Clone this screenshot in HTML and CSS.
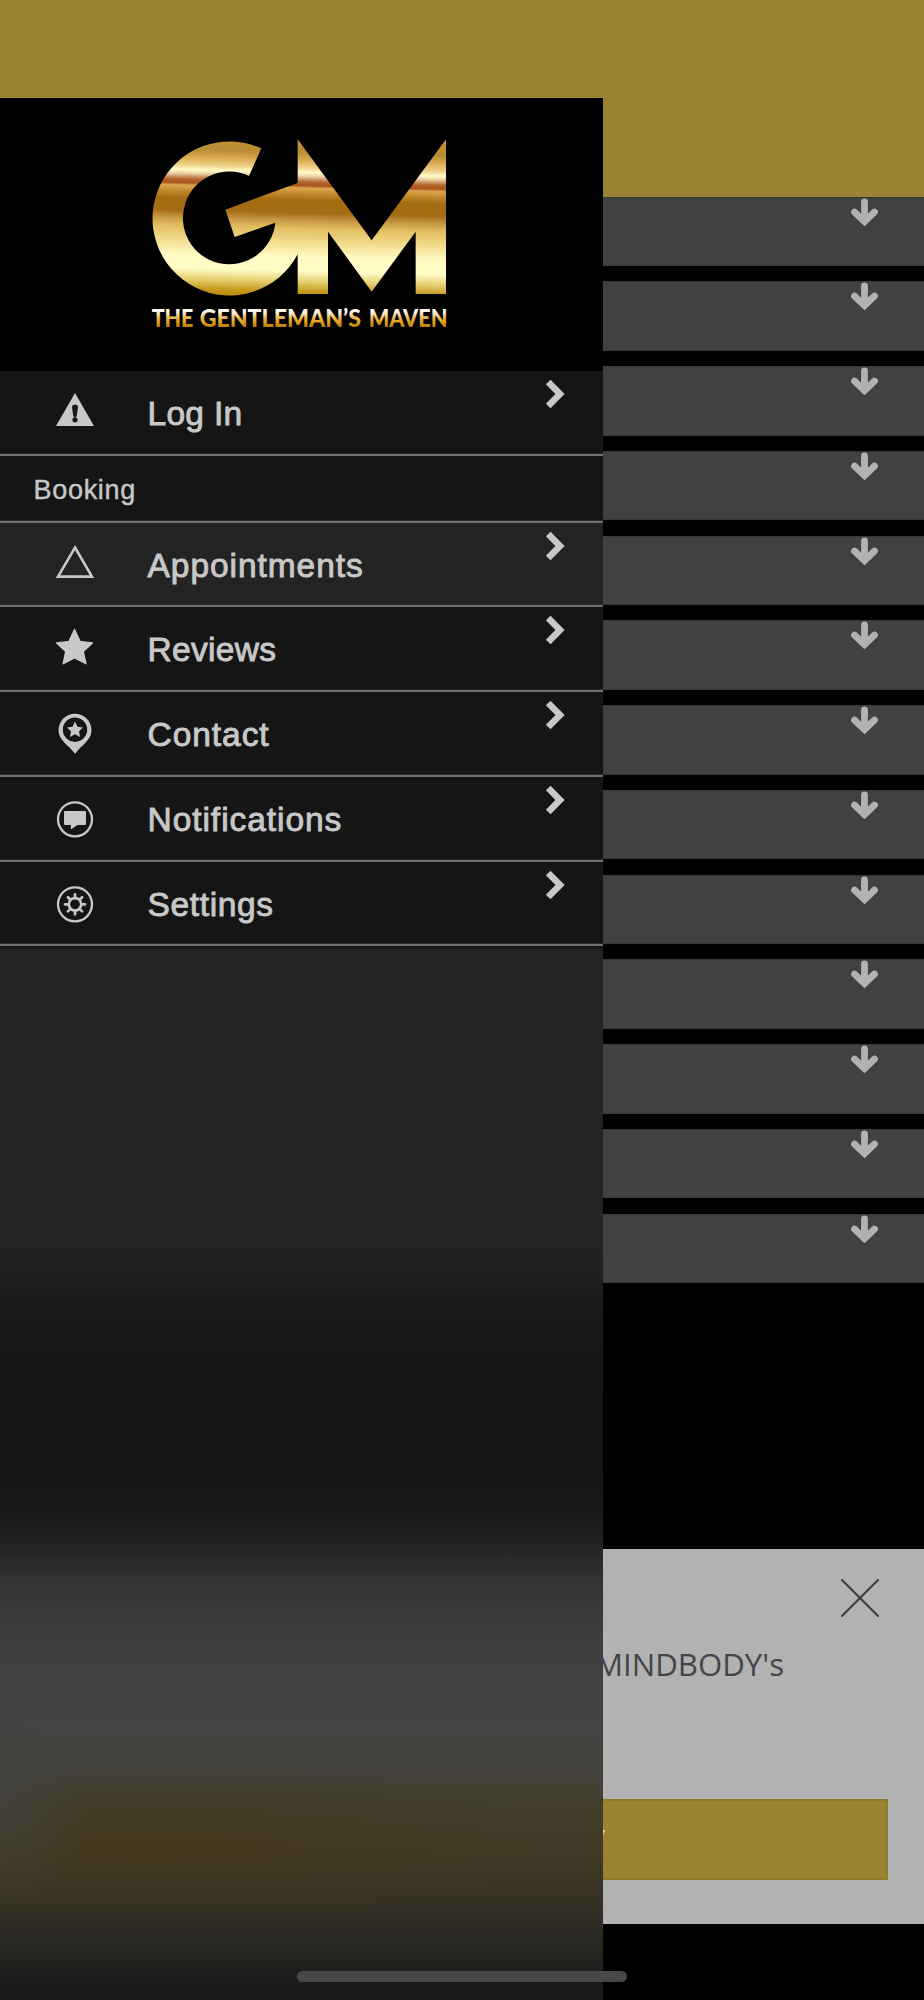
FILE: index.html
```html
<!DOCTYPE html>
<html lang="en">
<head>
<meta charset="utf-8">
<title>The Gentleman's Maven</title>
<link rel="stylesheet" href="styles.css">
</head>
<body>
<svg class="defs" width="0" height="0">
  <symbol id="down" viewBox="0 0 28 28"><path d="M14.500 4V20M4.500 14L14.500 23.600L24.500 14" fill="none" stroke="#b2b2b2" stroke-width="6.8" stroke-linecap="round"/><path d="M8.500 17L14.500 27.200L20.500 17Z" fill="#b2b2b2"/></symbol>
  <symbol id="chev" viewBox="0 0 20 30"><path d="M3.2 3L15 15L3.2 27" fill="none" stroke="#c8c8c8" stroke-width="6.6"/></symbol>
</svg>
<div class="screen">
  <header class="topbar"></header>
  <main class="list">
    <div class="bar"><svg class="down"><use href="#down"/></svg></div>
    <div class="bar"><svg class="down"><use href="#down"/></svg></div>
    <div class="bar"><svg class="down"><use href="#down"/></svg></div>
    <div class="bar"><svg class="down"><use href="#down"/></svg></div>
    <div class="bar"><svg class="down"><use href="#down"/></svg></div>
    <div class="bar"><svg class="down"><use href="#down"/></svg></div>
    <div class="bar"><svg class="down"><use href="#down"/></svg></div>
    <div class="bar"><svg class="down"><use href="#down"/></svg></div>
    <div class="bar"><svg class="down"><use href="#down"/></svg></div>
    <div class="bar"><svg class="down"><use href="#down"/></svg></div>
    <div class="bar"><svg class="down"><use href="#down"/></svg></div>
    <div class="bar"><svg class="down"><use href="#down"/></svg></div>
    <div class="bar"><svg class="down"><use href="#down"/></svg></div>
  </main>
  <section class="banner">
    <svg class="close" viewBox="0 0 38 38"><path d="M1 1L37 37M37 1L1 37" stroke="#3e3f44" stroke-width="2.2" stroke-linecap="round"/></svg>
    <p class="message">MINDBODY's</p>
    <div class="button"><span>y</span></div>
  </section>

  <aside class="drawer">
    <div class="brand">
      <svg class="logo" viewBox="0 0 1020 690">
        <defs>
          <linearGradient id="gold" gradientUnits="userSpaceOnUse" x1="300" y1="58" x2="288" y2="526">
            <stop offset="0" stop-color="#c2922c"/><stop offset=".07" stop-color="#b88d39"/>
            <stop offset=".12" stop-color="#dba94d"/><stop offset=".17" stop-color="#efd28b"/>
            <stop offset=".2" stop-color="#fffbc8"/><stop offset=".225" stop-color="#ecd0a4"/>
            <stop offset=".26" stop-color="#b2672f"/><stop offset=".285" stop-color="#a9541c"/>
            <stop offset=".3" stop-color="#dca64f"/><stop offset=".335" stop-color="#c38a2d"/>
            <stop offset=".38" stop-color="#a56d11"/><stop offset=".46" stop-color="#a56c15"/>
            <stop offset=".51" stop-color="#c89a45"/><stop offset=".56" stop-color="#e2be62"/>
            <stop offset=".65" stop-color="#f2dc8e"/><stop offset=".74" stop-color="#fffac2"/>
            <stop offset=".83" stop-color="#fffdc8"/><stop offset=".9" stop-color="#e6cf72"/>
            <stop offset=".96" stop-color="#c59b1f"/><stop offset="1" stop-color="#bd8b08"/>
          </linearGradient>
          <linearGradient id="tag" gradientUnits="userSpaceOnUse" x1="0" y1="565" x2="0" y2="622">
            <stop offset="0" stop-color="#fff"/><stop offset=".22" stop-color="#fbf2dc"/>
            <stop offset=".5" stop-color="#e8b850"/><stop offset=".72" stop-color="#e0a01a"/>
            <stop offset="1" stop-color="#b57a08"/>
          </linearGradient>
        </defs>
        <path fill="url(#gold)" d="M503 58L725 361L948 58V522H857V335L725 515L594 335V522H503V403A231 231 0 1 1 394 85L357 168A139 139 0 1 0 436 308L314 351L286 269L503 189Z"/>
        <g class="tagline" fill="url(#tag)">
          <text x="65" y="620" textLength="125" lengthAdjust="spacingAndGlyphs">THE</text>
          <text x="209" y="620" textLength="484" lengthAdjust="spacingAndGlyphs">GENTLEMAN’S</text>
          <text x="716" y="620" textLength="236" lengthAdjust="spacingAndGlyphs">MAVEN</text>
        </g>
      </svg>
    </div>
    <nav class="menu">
      <a class="item">
        <svg class="icon" viewBox="0 0 40 44"><path fill="#c8c8c8" d="M20 2L39 35H1Z"/><path fill="#171717" d="M17 16.5A3 3 0 0 1 23 16.5L21.8 24.5A1.8 1.8 0 0 1 18.2 24.5Z"/><circle cx="20" cy="28.8" r="2.6" fill="#171717"/></svg>
        <span class="label tight">Log In</span><svg class="chev"><use href="#chev"/></svg>
      </a>
      <h2 class="section">Booking</h2>
      <a class="item active">
        <svg class="icon" viewBox="0 0 40 44"><path fill="none" stroke="#c8c8c8" stroke-width="2.6" d="M20 4.5L37 33.6H3Z"/></svg>
        <span class="label">Appointments</span><svg class="chev"><use href="#chev"/></svg>
      </a>
      <a class="item">
        <svg class="icon" viewBox="0 0 40 44"><path fill="#c8c8c8" stroke="#c8c8c8" stroke-width="1.4" stroke-linejoin="round" d="M19.5 2.5L25 14.4L37.4 15.9L28.2 24.5L31 36.7L19.5 30.8L8.2 36.7L10.8 24.5L1.6 15.9L14.1 14.4Z"/></svg>
        <span class="label tight">Reviews</span><svg class="chev"><use href="#chev"/></svg>
      </a>
      <a class="item">
        <svg class="icon" viewBox="0 0 40 44"><path fill="#c8c8c8" fill-rule="evenodd" d="M20 1.7A16.5 16.5 0 0 1 36.5 18.2C36.5 28 27 32.5 20 41.8C13 32.5 3.5 28 3.5 18.2A16.5 16.5 0 0 1 20 1.7ZM20 5.5A12.2 12.2 0 1 0 20 29.9A12.2 12.2 0 1 0 20 5.5Z"/><path fill="#c8c8c8" d="M20 9.5L22.5 14.7L28 15.4L24 19.2L25 25L20 22.2L15 25L16 19.2L12 15.4L17.5 14.7Z"/></svg>
        <span class="label">Contact</span><svg class="chev"><use href="#chev"/></svg>
      </a>
      <a class="item">
        <svg class="icon" viewBox="0 0 40 44"><circle cx="20" cy="22.3" r="17" fill="none" stroke="#c8c8c8" stroke-width="2.3"/><path fill="#c8c8c8" d="M10 14H30Q31 14 31 15V27Q31 28 30 28H22.5L15.8 32.5V28H10Q9 28 9 27V15Q9 14 10 14Z"/></svg>
        <span class="label">Notifications</span><svg class="chev"><use href="#chev"/></svg>
      </a>
      <a class="item">
        <svg class="icon" viewBox="0 0 40 44"><circle cx="20" cy="22.3" r="17" fill="none" stroke="#c8c8c8" stroke-width="2.3"/><g transform="translate(20 22.3)" fill="none" stroke="#c8c8c8" stroke-width="2.7" stroke-linecap="round"><circle r="6.2"/><path d="M0-7.5V-10M0 7.5V10M-7.5 0H-10M7.5 0H10M5.3-5.3L7.1-7.1M-5.3-5.3L-7.1-7.1M5.3 5.3L7.1 7.1M-5.3 5.3L-7.1 7.1"/></g></svg>
        <span class="label mid">Settings</span><svg class="chev"><use href="#chev"/></svg>
      </a>
    </nav>
  </aside>
  <div class="home"></div>
</div>
</body>
</html>
```

FILE: styles.css
```css
* { box-sizing: border-box; }
body { margin: 0; background: #000; }
.defs { position: absolute; }
.screen {
  position: relative;
  width: 924px;
  height: 2000px;
  overflow: hidden;
  background: #000;
}
.topbar { height: 196.5px; background: #9a8332; }
.list {
  display: flex;
  flex-direction: column;
  gap: 15.27px;
  height: 1352.5px;
}
.bar {
  display: flex;
  justify-content: flex-end;
  flex: none;
  height: 69.5px;
  padding: 0 46px 0 0;
  background: #414141;
  border: solid #383838;
  border-width: 1px 0;
}
.down { width: 28px; height: 28px; }
.banner {
  display: flex;
  flex-direction: column;
  align-items: flex-end;
  height: 375px;
  padding: 30px 36px 0 0;
  background: #b2b2b2;
}
.close { width: 38px; height: 38px; margin-right: 9.5px; }
.message {
  margin: 26px 104px 0 0;
  font: 31.2px/42px "Open Sans", sans-serif;
  color: #42454a;
}
.button {
  width: 852px;
  height: 81px;
  margin-top: 114px;
  padding: 16px 0 0 554px;
  background: #9a8332;
  border: 2px solid #917a26;
  font: 26px/35px "Open Sans", sans-serif;
  color: #ddd;
}
.drawer {
  position: absolute;
  top: 98px;
  left: 0;
  width: 602.7px;
  bottom: 0;
  background:
    radial-gradient(ellipse 90px 110px at 0 1705px, rgba(66, 66, 63, .8), rgba(66, 66, 63, 0)),
    radial-gradient(ellipse 400px 80px at 150px 1748px, rgba(66, 54, 20, .5), rgba(66, 54, 20, 0)),
    linear-gradient(#161616 0, #161616 850px, #232323 851px, #232323 1140px, #202020 1172px, #1a1a1a 1205px,
      #161616 1255px, #141414 1300px, #141414 1370px, #181818 1410px, #242424 1450px, #333 1485px,
      #3d3d3d 1530px, #424242 1590px, #434342 1630px, #43423c 1670px, #433e2e 1705px, #423a25 1750px,
      #3b3424 1785px, #312e25 1820px, #262521 1850px, #1c1c1b 1882px, #191919 1902px);
}
.brand {
  display: flex;
  justify-content: center;
  height: 273px;
  padding-top: 22px;
  background: #000;
}
.logo { width: 340px; height: 230px; margin-right: 3px; }
.tagline {
  font-family: Lato, sans-serif;
  font-size: 76px;
  font-weight: 900;
}
.menu { color: #c8c8c8; font-family: "Liberation Sans", Arial, sans-serif; }
.item {
  display: flex;
  height: 84.77px;
  padding: 0 38px 0 55px;
  background: #151515;
  border-bottom: 2px solid #707070;
  box-shadow: inset 0 -1px #2c2c2c;
}
.item.active { background: #232323; }
.icon { flex: none; width: 40px; height: 44px; margin-top: 20px; }
.label {
  flex: 1;
  margin-left: 52.5px;
  font-size: 33.5px;
  line-height: 86px;
  letter-spacing: .95px;
  font-variant-ligatures: none;
  -webkit-text-stroke: .9px #c8c8c8;
}
.label.tight { letter-spacing: .3px; }
.label.mid { letter-spacing: .65px; }
.chev { width: 20px; height: 30px; margin-top: 8px; }
.section {
  height: 66.9px;
  margin: 0;
  padding-left: 33.5px;
  background: #151515;
  border-bottom: 2px solid #707070;
  box-shadow: inset 0 -1px #2c2c2c;
  font-size: 27px;
  font-weight: 400;
  line-height: 69px;
  letter-spacing: .7px;
  -webkit-text-stroke: .4px #c8c8c8;
}
.home {
  position: absolute;
  left: 297px;
  top: 1971px;
  width: 330px;
  height: 11px;
  border-radius: 6px;
  background: #484848;
}
```
